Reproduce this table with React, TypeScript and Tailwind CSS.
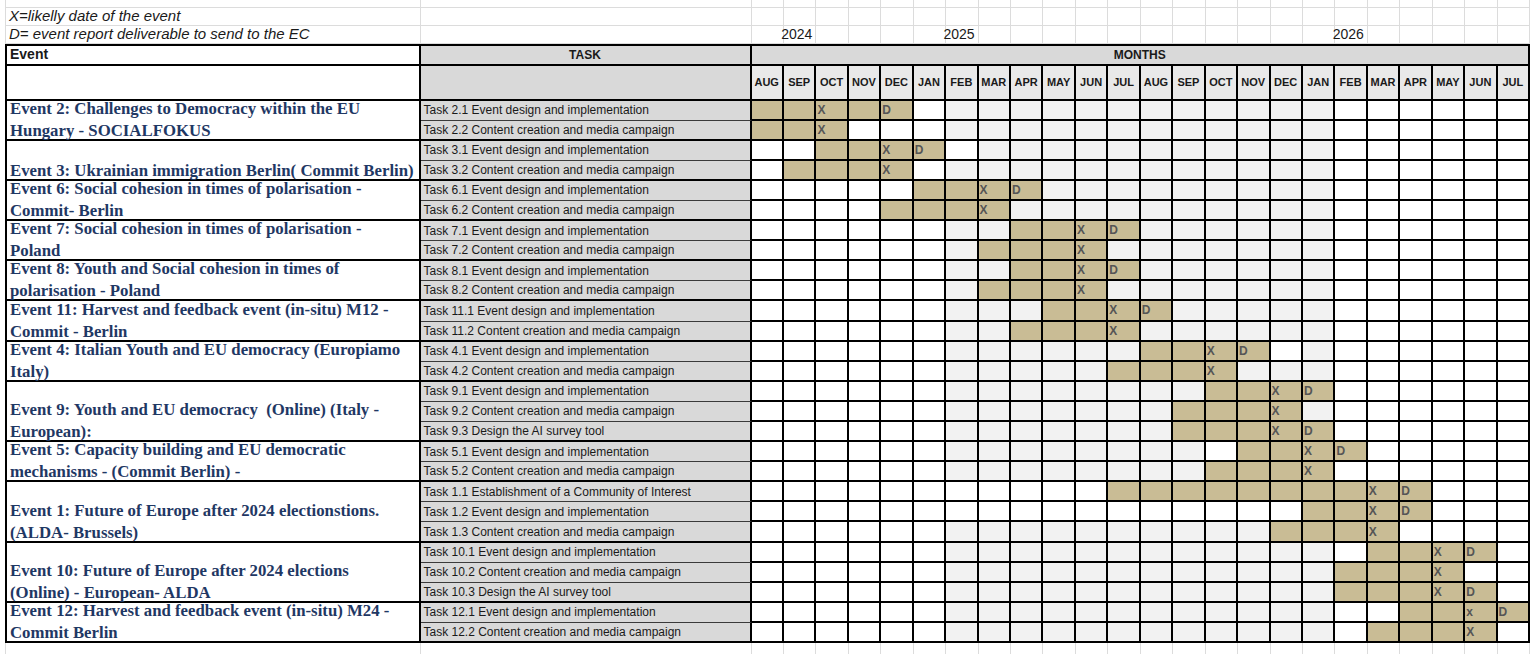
import React from "react";

type Task = {
  name: string;
  start: number;
  end: number;
  x: number;
  d?: number;
  xLabel?: string;
  white?: number[];
};

type EventGroup = { lines: string[]; tasks: Task[] };

const months = [
  "AUG", "SEP", "OCT", "NOV", "DEC", "JAN", "FEB", "MAR", "APR", "MAY", "JUN", "JUL",
  "AUG", "SEP", "OCT", "NOV", "DEC", "JAN", "FEB", "MAR", "APR", "MAY", "JUN", "JUL",
];

const design = (n: string) => `Task ${n} Event design and implementation`;
const content = (n: string) => `Task ${n} Content creation and media campaign`;
const span = (a: number, b: number) => Array.from({ length: b - a + 1 }, (_, i) => a + i);

const events: EventGroup[] = [
  {
    lines: ["Event 2: Challenges to Democracy within the EU", "Hungary - SOCIALFOKUS"],
    tasks: [
      { name: design("2.1"), start: 0, end: 4, x: 2, d: 4 },
      { name: content("2.2"), start: 0, end: 2, x: 2 },
    ],
  },
  {
    lines: ["Event 3: Ukrainian immigration Berlin( Commit Berlin)"],
    tasks: [
      { name: design("3.1"), start: 2, end: 5, x: 4, d: 5, white: [6] },
      { name: content("3.2"), start: 1, end: 4, x: 4 },
    ],
  },
  {
    lines: ["Event 6: Social cohesion in times of polarisation -", "Commit- Berlin"],
    tasks: [
      { name: design("6.1"), start: 5, end: 8, x: 7, d: 8 },
      { name: content("6.2"), start: 4, end: 7, x: 7 },
    ],
  },
  {
    lines: ["Event 7: Social cohesion in times of polarisation -", "Poland"],
    tasks: [
      { name: design("7.1"), start: 8, end: 11, x: 10, d: 11 },
      { name: content("7.2"), start: 7, end: 10, x: 10 },
    ],
  },
  {
    lines: ["Event 8: Youth and Social cohesion in times of", "polarisation - Poland"],
    tasks: [
      { name: design("8.1"), start: 8, end: 11, x: 10, d: 11 },
      { name: content("8.2"), start: 7, end: 10, x: 10 },
    ],
  },
  {
    lines: ["Event 11: Harvest and feedback event (in-situ) M12 -", "Commit - Berlin"],
    tasks: [
      { name: design("11.1"), start: 9, end: 12, x: 11, d: 12 },
      { name: content("11.2"), start: 8, end: 11, x: 11 },
    ],
  },
  {
    lines: ["Event 4: Italian Youth and EU democracy (Europiamo", "Italy)"],
    tasks: [
      { name: design("4.1"), start: 12, end: 15, x: 14, d: 15, white: [16] },
      { name: content("4.2"), start: 11, end: 14, x: 14 },
    ],
  },
  {
    lines: ["Event 9: Youth and EU democracy  (Online) (Italy -", "European):"],
    tasks: [
      { name: design("9.1"), start: 14, end: 17, x: 16, d: 17 },
      { name: content("9.2"), start: 13, end: 16, x: 16 },
      { name: "Task 9.3 Design the AI survey tool", start: 13, end: 17, x: 16, d: 17 },
    ],
  },
  {
    lines: ["Event 5: Capacity building and EU democratic", "mechanisms - (Commit Berlin) -"],
    tasks: [
      { name: design("5.1"), start: 15, end: 18, x: 17, d: 18, white: [14] },
      { name: content("5.2"), start: 14, end: 17, x: 17 },
    ],
  },
  {
    lines: ["Event 1: Future of Europe after 2024 electionstions.", "(ALDA- Brussels)"],
    tasks: [
      { name: "Task 1.1 Establishment of a Community of Interest", start: 11, end: 20, x: 19, d: 20, white: span(6, 10) },
      { name: design("1.2"), start: 17, end: 20, x: 19, d: 20, white: span(6, 16) },
      { name: content("1.3"), start: 16, end: 19, x: 19 },
    ],
  },
  {
    lines: ["Event 10: Future of Europe after 2024 elections", "(Online) - European- ALDA"],
    tasks: [
      { name: design("10.1"), start: 19, end: 22, x: 21, d: 22 },
      { name: content("10.2"), start: 18, end: 21, x: 21 },
      { name: "Task 10.3 Design the AI survey tool", start: 18, end: 22, x: 21, d: 22 },
    ],
  },
  {
    lines: ["Event 12: Harvest and feedback event (in-situ) M24 -", "Commit Berlin"],
    tasks: [
      { name: design("12.1"), start: 20, end: 23, x: 22, xLabel: "x", d: 23 },
      { name: content("12.2"), start: 19, end: 22, x: 22 },
    ],
  },
];

const cellFill = (t: Task, c: number) => {
  if (c >= t.start && c <= t.end) return "bg-[#c9bc95]";
  if (t.white?.includes(c)) return "bg-white";
  if (c >= 6 && c <= 17) return "bg-[#f2f2f2]";
  return "bg-white";
};

const cols = Array.from({ length: 24 }, (_, i) => i);

const App = () => {
  return (
    <div className="w-[1536px] h-[654px] overflow-hidden bg-white font-['Liberation_Sans',Arial,sans-serif] text-[#1a1a1a]">
      {/* sheet rows above the table */}
      <div className="ml-[5px] w-[1525px] grid grid-cols-[414.5px_331px_repeat(24,minmax(0,1fr))] grid-rows-[7.5px_18px_18px] border-l border-[#dcdcdc]">
        {[0, 1, 2].map((r) => (
          <React.Fragment key={r}>
            <div className="border-r border-b border-[#dcdcdc] flex items-center pl-[3px] whitespace-nowrap italic text-[15px]">
              {r === 1 && "X=likelly date of the event"}
              {r === 2 && "D= event report deliverable to send to the EC"}
            </div>
            <div className="border-r border-b border-[#dcdcdc]" />
            {cols.map((c) => (
              <div key={c} className="border-r border-b border-[#dcdcdc] flex items-center justify-end pr-[3px] text-[14px] whitespace-nowrap">
                {r === 2 && c === 1 && "2024"}
                {r === 2 && c === 6 && "2025"}
                {r === 2 && c === 18 && "2026"}
              </div>
            ))}
          </React.Fragment>
        ))}
      </div>

      {/* gantt table */}
      <div className="ml-[5px] w-[1525px] grid grid-cols-[413.5px_331px_repeat(24,minmax(0,1fr))] grid-rows-[20px_35px_repeat(27,20.1px)] border-l-2 border-t-2 border-black">
        <div className="border-r-2 border-b-2 border-black flex items-center pl-[3px] font-bold text-[14px]">Event</div>
        <div className="border-r-2 border-b-2 border-black bg-[#d9d9d9] flex items-center justify-center font-bold text-[12px]">TASK</div>
        <div className="col-span-24 border-r-2 border-b-2 border-black bg-[#d9d9d9] flex items-center justify-center font-bold text-[12px]">MONTHS</div>

        <div className="border-r-2 border-b-2 border-black bg-white" />
        <div className="border-r-2 border-b-2 border-black bg-[#d9d9d9]" />
        {months.map((m, i) => (
          <div key={i} className="border-r-2 border-b-2 border-black bg-[#e9e9e9] flex items-center justify-center font-bold text-[11px]">
            {m}
          </div>
        ))}

        {events.map((ev, ei) => (
          <React.Fragment key={ei}>
            <div
              className={`${ev.tasks.length === 3 ? "row-span-3" : "row-span-2"} col-start-1 border-r-2 border-b-2 border-black bg-white flex flex-col justify-end pl-[3px] whitespace-pre font-['Liberation_Serif','Times_New_Roman',serif] font-bold text-[16.8px] leading-[22px] text-[#1f3864]`}
            >
              <div className="-mb-[3px]">
                {ev.lines.map((l, li) => (
                  <div key={li}>{l}</div>
                ))}
              </div>
            </div>
            {ev.tasks.map((t, ti) => {
              const last = ti === ev.tasks.length - 1;
              return (
                <React.Fragment key={ti}>
                  <div
                    className={`col-start-2 border-r-2 border-r-black bg-[#d9d9d9] flex items-center pl-[3px] text-[12px] whitespace-nowrap ${
                      last ? "border-b-2 border-b-black" : "border-b border-b-[#3a3a3a]"
                    }`}
                  >
                    {t.name}
                  </div>
                  {cols.map((c) => (
                    <div
                      key={c}
                      className={`border-r-2 border-b-2 border-black flex items-center pl-[1px] font-bold text-[12px] text-[#555] ${cellFill(t, c)}`}
                    >
                      {c === t.x && (t.xLabel ?? "X")}
                      {c === t.d && "D"}
                    </div>
                  ))}
                </React.Fragment>
              );
            })}
          </React.Fragment>
        ))}
      </div>

      {/* sheet rows below the table */}
      <div className="ml-[5px] w-[1525px] grid grid-cols-[414.5px_331px_repeat(24,minmax(0,1fr))] grid-rows-[20px] border-l border-[#dcdcdc]">
        <div className="border-r border-b border-[#dcdcdc]" />
        <div className="border-r border-b border-[#dcdcdc]" />
        {cols.map((c) => (
          <div key={c} className="border-r border-b border-[#dcdcdc]" />
        ))}
      </div>
    </div>
  );
};

export default App;
